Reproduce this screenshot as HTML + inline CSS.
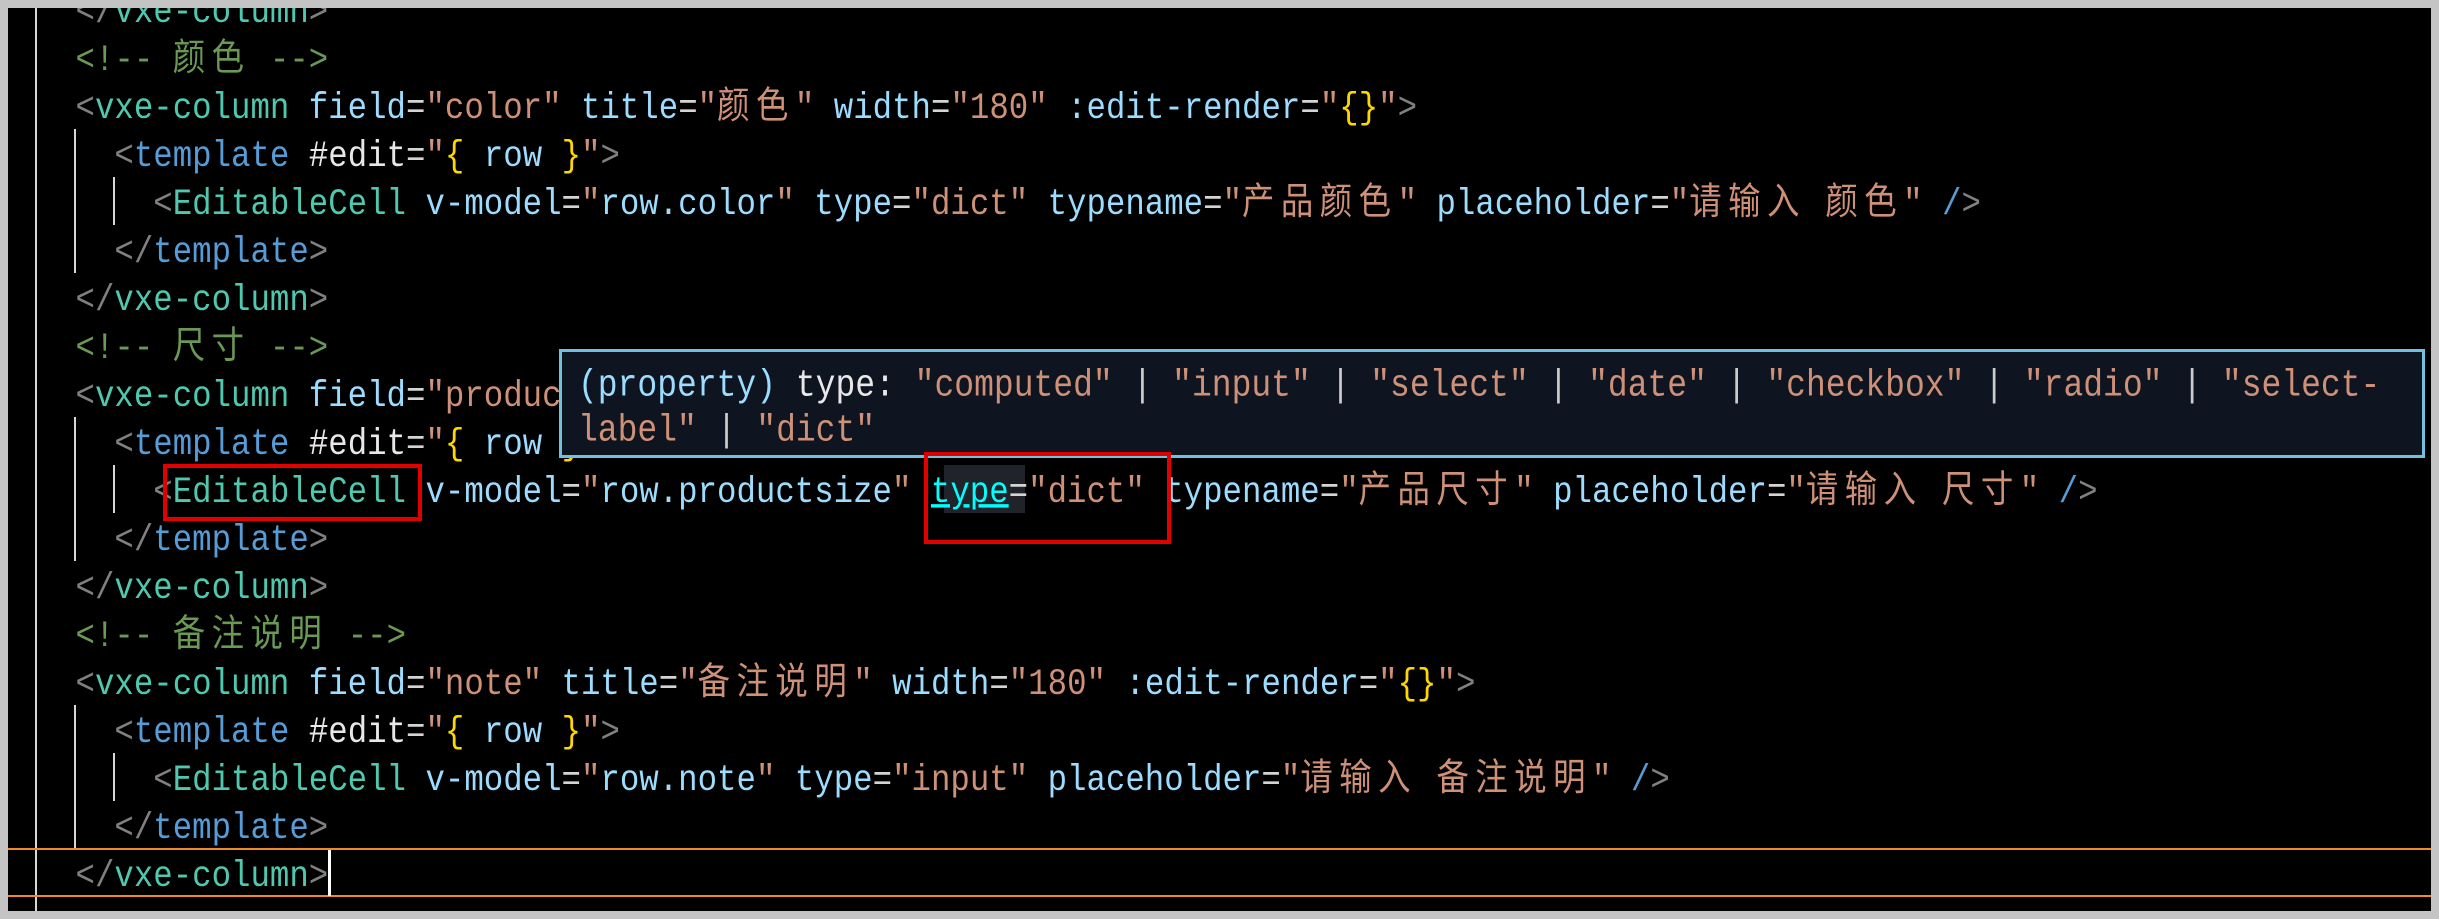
<!DOCTYPE html>
<html><head><meta charset="utf-8"><style>
html,body{margin:0;padding:0;}
body{width:2439px;height:919px;background:#c4c4c4;position:relative;overflow:hidden;}
#ed{position:absolute;left:8px;top:8px;width:2423px;height:903px;background:#000;overflow:hidden;}
.code{position:absolute;left:67.5px;top:-19px;font-family:"Liberation Mono",monospace;font-size:32.4px;color:#d4d4d4;}
.l{height:48px;line-height:48px;overflow:visible;white-space:pre;transform:scaleY(1.15);transform-origin:50% 55%;}
.c{font-family:"Noto Sans CJK SC",sans-serif;letter-spacing:6.5px;line-height:1;}
.p{color:#808080}.t{color:#4ec9b0}.b{color:#569cd6}.a{color:#9cdcfe}.s{color:#ce9178}.g{color:#6a9955}.y{color:#ffd700}.w{color:#e8e8e8}
.gd{position:absolute;width:2px;background:#d8d8d8;}
.tip{position:absolute;left:551px;top:341px;width:1866px;height:109px;background:#0e1420;border:3px solid #72c0e0;font-family:"Liberation Mono",monospace;font-size:33px;color:#e8e8e8;padding:11px 0 0 16px;box-sizing:border-box;}
.tip div{height:45px;line-height:45px;white-space:pre;transform:scaleY(1.15);}
.red{position:absolute;border:4px solid #e00000;box-sizing:border-box;}
</style></head><body>
<div id="ed">
<div class="gd" style="left:27px;top:0;height:903px"></div>
<div class="gd" style="left:66px;top:121px;height:144px"></div>
<div class="gd" style="left:105px;top:169px;height:48px"></div>
<div class="gd" style="left:66px;top:409px;height:144px"></div>
<div class="gd" style="left:105px;top:457px;height:48px"></div>
<div class="gd" style="left:66px;top:697px;height:144px"></div>
<div class="gd" style="left:105px;top:745px;height:48px"></div>
<div style="position:absolute;left:0;top:840px;width:2423px;height:2px;background:#f08a24"></div>
<div style="position:absolute;left:0;top:887px;width:2423px;height:2px;background:#f08a24"></div>
<div style="position:absolute;left:936px;top:457px;width:81px;height:48px;background:#20242a"></div>
<div class="code"><div class="l"><span class="p">&lt;/</span><span class="t">vxe-column</span><span class="p">&gt;</span></div><div class="l"><span class="g">&lt;!-- <span class="c">颜色</span> --&gt;</span></div><div class="l"><span class="p">&lt;</span><span class="t">vxe-column</span> <span class="a">field</span>=<span class="s">"color"</span> <span class="a">title</span>=<span class="s">"<span class="c">颜色</span>"</span> <span class="a">width</span>=<span class="s">"180"</span> <span class="a">:edit-render</span>=<span class="s">"</span><span class="y">{}</span><span class="s">"</span><span class="p">&gt;</span></div><div class="l">  <span class="p">&lt;</span><span class="b">template</span> <span class="w">#edit</span>=<span class="s">"</span><span class="y">{</span> <span class="a">row</span> <span class="y">}</span><span class="s">"</span><span class="p">&gt;</span></div><div class="l">    <span class="p">&lt;</span><span class="t">EditableCell</span> <span class="a">v-model</span>=<span class="s">"</span><span class="a">row.color</span><span class="s">"</span> <span class="a">type</span>=<span class="s">"dict"</span> <span class="a">typename</span>=<span class="s">"<span class="c">产品颜色</span>"</span> <span class="a">placeholder</span>=<span class="s">"<span class="c">请输入</span> <span class="c">颜色</span>"</span> <span class="b">/</span><span class="p">&gt;</span></div><div class="l">  <span class="p">&lt;/</span><span class="b">template</span><span class="p">&gt;</span></div><div class="l"><span class="p">&lt;/</span><span class="t">vxe-column</span><span class="p">&gt;</span></div><div class="l"><span class="g">&lt;!-- <span class="c">尺寸</span> --&gt;</span></div><div class="l"><span class="p">&lt;</span><span class="t">vxe-column</span> <span class="a">field</span>=<span class="s">"productsize"</span></div><div class="l">  <span class="p">&lt;</span><span class="b">template</span> <span class="w">#edit</span>=<span class="s">"</span><span class="y">{</span> <span class="a">row</span> <span class="y">}</span><span class="s">"</span><span class="p">&gt;</span></div><div class="l">    <span class="p">&lt;</span><span class="t">EditableCell</span> <span class="a">v-model</span>=<span class="s">"</span><span class="a">row.productsize</span><span class="s">"</span> <span style="color:#00ffff;text-decoration:underline;text-decoration-thickness:3px">type</span>=<span class="s">"dict"</span> <span class="a">typename</span>=<span class="s">"<span class="c">产品尺寸</span>"</span> <span class="a">placeholder</span>=<span class="s">"<span class="c">请输入</span> <span class="c">尺寸</span>"</span> <span class="b">/</span><span class="p">&gt;</span></div><div class="l">  <span class="p">&lt;/</span><span class="b">template</span><span class="p">&gt;</span></div><div class="l"><span class="p">&lt;/</span><span class="t">vxe-column</span><span class="p">&gt;</span></div><div class="l"><span class="g">&lt;!-- <span class="c">备注说明</span> --&gt;</span></div><div class="l"><span class="p">&lt;</span><span class="t">vxe-column</span> <span class="a">field</span>=<span class="s">"note"</span> <span class="a">title</span>=<span class="s">"<span class="c">备注说明</span>"</span> <span class="a">width</span>=<span class="s">"180"</span> <span class="a">:edit-render</span>=<span class="s">"</span><span class="y">{}</span><span class="s">"</span><span class="p">&gt;</span></div><div class="l">  <span class="p">&lt;</span><span class="b">template</span> <span class="w">#edit</span>=<span class="s">"</span><span class="y">{</span> <span class="a">row</span> <span class="y">}</span><span class="s">"</span><span class="p">&gt;</span></div><div class="l">    <span class="p">&lt;</span><span class="t">EditableCell</span> <span class="a">v-model</span>=<span class="s">"</span><span class="a">row.note</span><span class="s">"</span> <span class="a">type</span>=<span class="s">"input"</span> <span class="a">placeholder</span>=<span class="s">"<span class="c">请输入</span> <span class="c">备注说明</span>"</span> <span class="b">/</span><span class="p">&gt;</span></div><div class="l">  <span class="p">&lt;/</span><span class="b">template</span><span class="p">&gt;</span></div><div class="l"><span class="p">&lt;/</span><span class="t">vxe-column</span><span class="p">&gt;</span></div></div>
<div style="position:absolute;left:320px;top:842px;width:3px;height:46px;background:#fff"></div>
<div class="tip"><div><span class="a">(property)</span> type: <span class="s">"computed"</span> <span style="color:#ccc">|</span> <span class="s">"input"</span> <span style="color:#ccc">|</span> <span class="s">"select"</span> <span style="color:#ccc">|</span> <span class="s">"date"</span> <span style="color:#ccc">|</span> <span class="s">"checkbox"</span> <span style="color:#ccc">|</span> <span class="s">"radio"</span> <span style="color:#ccc">|</span> <span class="s">"select-</span></div><div><span class="s">label"</span> <span style="color:#ccc">|</span> <span class="s">"dict"</span></div></div>
<div class="red" style="left:155px;top:456px;width:259px;height:57px"></div>
<div class="red" style="left:916px;top:444px;width:247px;height:92px"></div>
</div>
</body></html>
